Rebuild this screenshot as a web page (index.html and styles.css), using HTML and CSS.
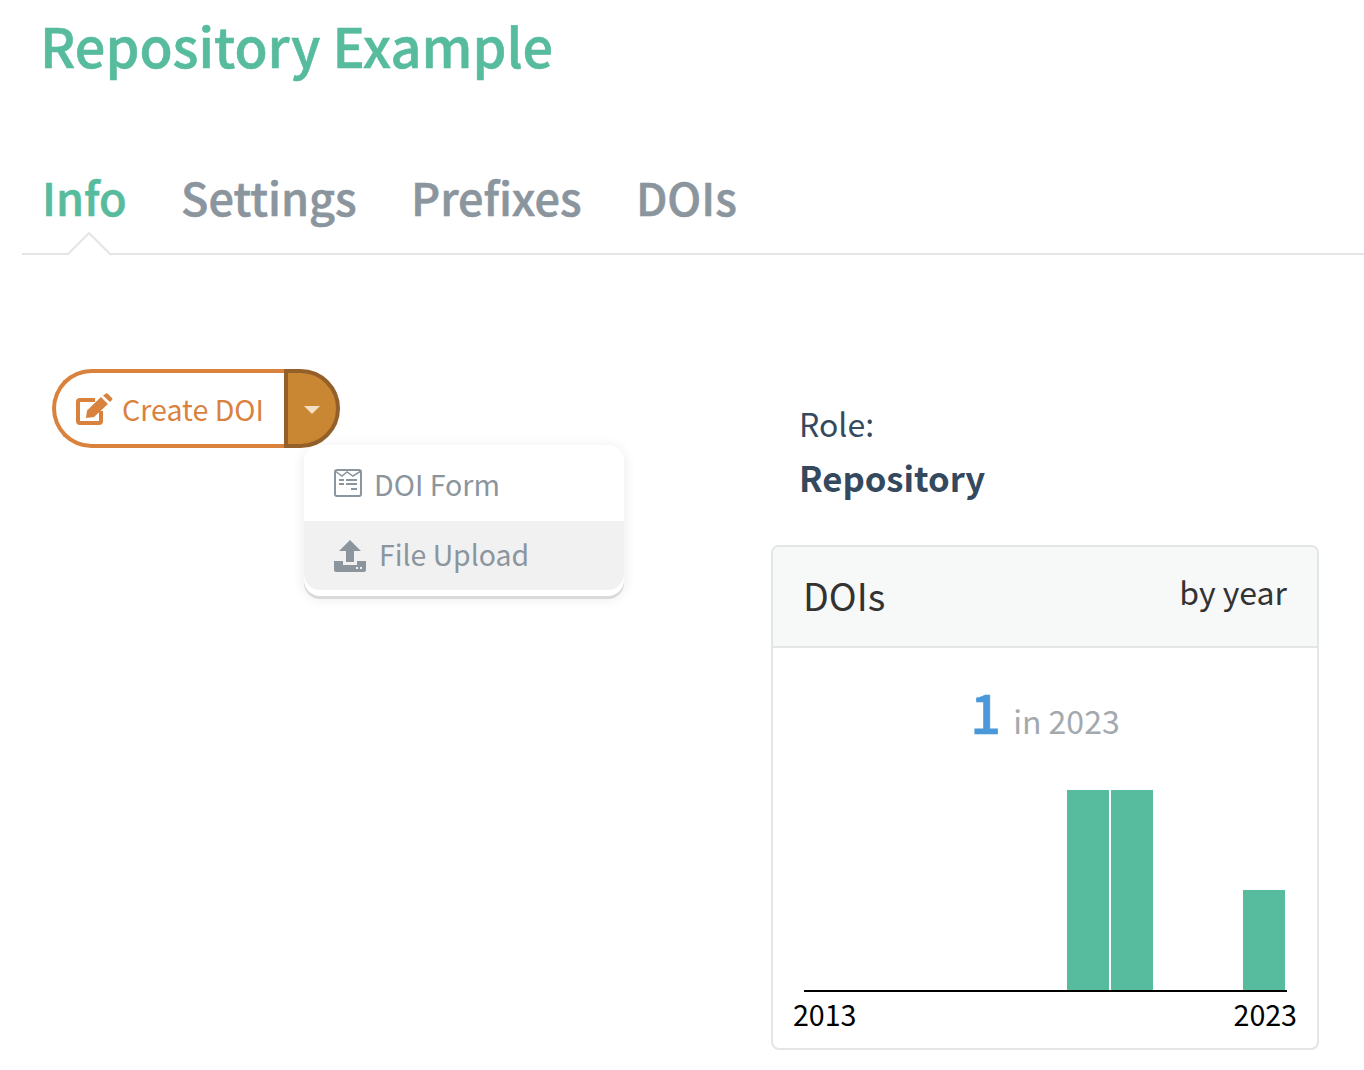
FILE: index.html
```html
<!DOCTYPE html>
<html lang="en">
<head>
<meta charset="utf-8">
<title>Repository Example</title>
<link rel="stylesheet" href="styles.css">
</head>
<body>
<header class="head"><h1 class="title">Repository Example</h1></header>
<nav class="tabs">
  <a class="tab active">Info<svg class="notch" width="46" height="25" viewBox="0 0 46 25"><path d="M1 24 L23 2 L45 24" fill="#fff" stroke="#e3e5e6" stroke-width="2"/></svg></a>
  <a class="tab">Settings</a>
  <a class="tab">Prefixes</a>
  <a class="tab">DOIs</a>
</nav>
<main class="content">
  <section class="left">
    <div class="btn-group">
      <button class="btn-main">
        <svg class="edit" width="37" height="32" viewBox="0 0 37 32"><path d="M19 7 H4 Q2 7 2 9 V28 Q2 30 4 30 H23 Q25 30 25 28 V18" fill="none" stroke="#d9823e" stroke-width="4"/><path d="M10 25 L11 17.5 L25 4 L32 11 L18 24 Z M27 2.5 L30 0.5 Q31 0 32 1 L36 5 Q37 6 36 7 L34 9 Z" fill="#d9823e"/></svg>
        <span>Create DOI</span>
      </button>
      <button class="btn-caret"><span class="caret"></span></button>
      <div class="menu">
        <a class="item">
          <svg width="28" height="28" viewBox="0 0 28 28"><rect x="1" y="1" width="26" height="26" rx="2" fill="none" stroke="#8b959e" stroke-width="2"/><path d="M1 2 L8 7 L13 3 L19 7 L27 2" fill="none" stroke="#8b959e" stroke-width="1.5"/><path d="M5 10h5v2H5zM12 10h11v2H12zM5 14h5v2H5zM12 14h11v2H12zM17 19h6v2h-6z" fill="#8b959e"/></svg>
          <span>DOI Form</span>
        </a>
        <a class="item hover">
          <svg width="32" height="32" viewBox="0 0 32 32"><path d="M16 0 L27 11 H20 V22 H12 V11 H5 Z" fill="#8b959e"/><path d="M0 21 H9 V25 H23 V21 H32 V30 Q32 32 30 32 H2 Q0 32 0 30 Z" fill="#8b959e"/><rect x="22" y="27" width="2" height="2" fill="#f1f1f1"/><rect x="26" y="27" width="2" height="2" fill="#f1f1f1"/></svg>
          <span>File Upload</span>
        </a>
      </div>
    </div>
  </section>
  <aside class="right">
    <div class="role">
      <div class="role-label">Role:</div>
      <div class="role-value">Repository</div>
    </div>
    <div class="panel">
      <div class="panel-head"><h3 class="panel-title">DOIs</h3><span class="panel-sub">by year</span></div>
      <div class="panel-body">
        <div class="stat"><span class="num">1</span><span class="stat-text">in 2023</span></div>
        <div class="chart">
          <div class="bars">
            <i class="slot"></i><i class="slot"></i><i class="slot"></i><i class="slot"></i><i class="slot"></i><i class="slot"></i>
            <i class="slot bar" style="height:200px"></i>
            <i class="slot bar" style="height:200px"></i>
            <i class="slot"></i>
            <i class="slot"></i>
            <i class="slot bar" style="height:100px"></i>
          </div>
          <div class="axis"></div>
          <div class="labels"><span>2013</span><span>2023</span></div>
        </div>
      </div>
    </div>
  </aside>
</main>
</body>
</html>
```
FILE: styles.css
```css
* { box-sizing: border-box; }
html, body { margin: 0; padding: 0; background: #fff; }
body {
  width: 1364px;
  height: 1070px;
  overflow: hidden;
  font-family: "Noto Sans CJK SC", "Noto Sans", sans-serif;
  color: #34495e;
}
.head { padding: 12px 0 0 40px; height: 159px; }
.title {
  margin: 0;
  font-size: 54px;
  line-height: 66px;
  font-weight: 500;
  color: #57bb9e;
  -webkit-text-stroke: 0.6px #57bb9e;
}
.tabs {
  margin-left: 22px;
  height: 96px;
  border-bottom: 2px solid #e3e5e6;
  display: flex;
  gap: 54.3px;
  padding: 12px 0 0 20px;
}
.tab {
  position: relative;
  font-size: 45px;
  line-height: 52px;
  font-weight: 500;
  color: #8b959e;
  -webkit-text-stroke: 0.6px #8b959e;
}
.tab.active { color: #57bb9e; -webkit-text-stroke-color: #57bb9e; }
.notch { position: absolute; left: 24px; top: 60px; }
.content { display: flex; padding: 114px 0 0 52px; }
.left { width: 719px; }
.btn-group { position: relative; display: flex; width: 288px; height: 79px; }
.btn-main {
  width: 232px;
  height: 79px;
  border: 4px solid #d9823e;
  border-right: 0;
  border-radius: 40px 0 0 40px;
  background: #fff;
  color: #d9823e;
  font: inherit;
  font-size: 28.6px;
  display: flex;
  align-items: center;
  gap: 9px;
  padding: 0 0 0 20px;
}
.btn-caret {
  width: 56px;
  height: 79px;
  border: 4px solid #94602a;
  border-radius: 0 40px 40px 0;
  background: #c98633;
  display: flex;
  align-items: center;
  justify-content: center;
  padding: 0;
}
.caret {
  width: 0; height: 0;
  border: 8px solid transparent;
  border-top-color: #f3dfc6;
  border-bottom: 0;
  margin-top: 3px;
}
.menu {
  position: absolute;
  left: 252px;
  top: 76px;
  width: 320px;
  height: 151px;
  border-radius: 16px;
  background: #fff;
  overflow: hidden;
  box-shadow: 0 3px 0 #d9d9d9, 0 2px 14px rgba(0,0,0,.09);
}
.item {
  display: flex;
  align-items: center;
  height: 69px;
  font-size: 28.6px;
  color: #8b959e;
  padding-left: 30px;
  gap: 12px;
}
.item:first-child { height: 76px; }
.item.hover { background: #f1f1f1; border-radius: 0 0 16px 16px; gap: 13px; font-size: 28.4px; }
.item.hover span { margin-top: -4px; }
.right { width: 548px; }
.role { margin: 34px 0 0 28px; height: 142px; }
.role-label { font-size: 32px; line-height: 40px; }
.role-value { font-size: 34.7px; line-height: 52px; font-weight: 700; margin-top: 8px; }
.panel {
  width: 548px;
  height: 505px;
  border: 2px solid #e3e5e6;
  border-radius: 8px;
  overflow: hidden;
}
.panel-head {
  height: 101px;
  background: #f7f9f8;
  border-bottom: 2px solid #e3e5e6;
  display: flex;
  justify-content: space-between;
  padding: 0 30px;
  color: #333;
}
.panel-title { margin: 0; font-size: 37.6px; font-weight: 400; line-height: 95px; }
.panel-sub { font-size: 32px; line-height: 89px; }
.panel-body { padding: 0 20px; }
.stat { display: flex; justify-content: center; align-items: baseline; gap: 12px; height: 142px; padding-top: 25px; }
.num { font-size: 54px; line-height: 76px; font-weight: 500; color: #4a98d9; -webkit-text-stroke: 0.6px #4a98d9; }
.stat-text { font-size: 32px; color: #a3a9ad; }
.chart { position: relative; }
.bars { display: flex; align-items: flex-end; height: 200px; margin: 0 10px; gap: 2px; width: 481px; }
.slot { display: block; width: 42px; flex: none; }
.bar { background: #57bb9e; }
.axis { height: 2px; background: #000; margin: 0 11px; width: 483px; }
.labels { display: flex; justify-content: space-between; width: 504px; font-size: 28.6px; line-height: 44px; color: #000; }
```
